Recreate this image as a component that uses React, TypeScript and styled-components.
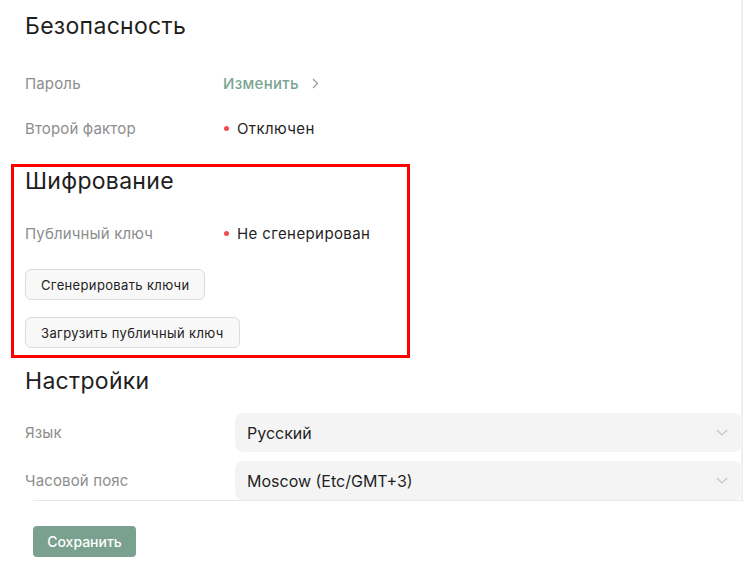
import React from "react";
import styled, { createGlobalStyle } from "styled-components";

const GlobalStyle = createGlobalStyle`
  body {
    margin: 0;
    background: #ffffff;
    font-family: Inter, "Noto Sans", "DejaVu Sans", sans-serif;
    color: #1f1f1f;
  }
`;

const Panel = styled.div`
  width: 743px;
  border-right: 2px solid #efefef;
  padding: 12px 0 0 25px;
  box-sizing: border-box;
`;

const Heading = styled.h2`
  margin: 0;
  font-size: 23px;
  line-height: 28px;
  font-weight: 400;
  letter-spacing: 0.3px;
  color: #1e1e1e;
`;

const InfoRow = styled.div<{ $top: number }>`
  display: flex;
  align-items: center;
  height: 22px;
  margin-top: ${(p) => p.$top}px;
`;

const Label = styled.div<{ $width: number }>`
  width: ${(p) => p.$width}px;
  flex-shrink: 0;
  font-size: 15px;
  letter-spacing: 0.15px;
  color: #8d8d8d;
`;

const Value = styled.div`
  display: flex;
  align-items: center;
  font-size: 15px;
  letter-spacing: 0.4px;
  color: #1f1f1f;
`;

const Dot = styled.span`
  width: 5px;
  height: 5px;
  border-radius: 50%;
  background: #f24b4b;
  margin: 0 8px 0 1px;
`;

const LinkButton = styled.button`
  display: flex;
  align-items: center;
  gap: 13px;
  padding: 0;
  border: none;
  background: none;
  font-family: inherit;
  font-size: 15px;
  font-weight: 500;
  letter-spacing: 0.3px;
  color: #7aa593;
  cursor: pointer;
`;

const Highlight = styled.section`
  width: 399px;
  margin: 25px 0 0 -14px;
  padding: 0 0 7px 11px;
  border: 3px solid #ff0000;
  box-sizing: border-box;
`;

const ActionButton = styled.button<{ $top: number }>`
  display: block;
  height: 31px;
  margin-top: ${(p) => p.$top}px;
  padding: 0 15px;
  border: 1px solid #dcdcdc;
  border-radius: 6px;
  background: #f8f8f8;
  font-family: inherit;
  font-size: 13px;
  letter-spacing: 0.35px;
  color: #222;
  cursor: pointer;
`;

const SettingsHeading = styled(Heading)`
  margin-top: 9px;
`;

const SelectRow = styled.div<{ $top: number }>`
  display: flex;
  align-items: center;
  margin-top: ${(p) => p.$top}px;
`;

const SelectBox = styled.div`
  flex: 1;
  height: 39px;
  margin-right: -1px;
  display: flex;
  align-items: center;
  justify-content: space-between;
  padding: 0 14px 0 12px;
  background: #f4f4f4;
  border-radius: 8px;
  font-size: 16px;
  color: #1f1f1f;
  cursor: pointer;
`;

const Divider = styled.div`
  height: 1px;
  margin-left: 8px;
  margin-right: -2px;
  background: #e8e8e8;
`;

const Footer = styled.div`
  padding: 25px 0 0 33px;
`;

const SaveButton = styled.button`
  width: 103px;
  height: 31px;
  border: none;
  border-radius: 4px;
  background: #7aa090;
  color: #ffffff;
  font-family: inherit;
  font-size: 14px;
  font-weight: 500;
  cursor: pointer;
`;

const ChevronRight = () => (
  <svg width="7" height="11" viewBox="0 0 7 11" fill="none">
    <path d="M1 1l4.5 4.5L1 10" stroke="#9a9a9a" strokeWidth="1.2" />
  </svg>
);

const ChevronDown = () => (
  <svg width="12" height="7" viewBox="0 0 12 7" fill="none">
    <path d="M1 1l5 5 5-5" stroke="#c2c2c2" strokeWidth="1.1" />
  </svg>
);

const Select: React.FC<{ value: string }> = ({ value }) => (
  <SelectBox>
    <span>{value}</span>
    <ChevronDown />
  </SelectBox>
);

const App: React.FC = () => {
  return (
    <>
      <GlobalStyle />
      <Panel>
        <Heading>Безопасность</Heading>
        <InfoRow $top={32}>
          <Label $width={198}>Пароль</Label>
          <LinkButton>
            Изменить
            <ChevronRight />
          </LinkButton>
        </InfoRow>
        <InfoRow $top={23}>
          <Label $width={198}>Второй фактор</Label>
          <Value>
            <Dot />
            Отключен
          </Value>
        </InfoRow>

        <Highlight>
          <Heading>Шифрование</Heading>
          <InfoRow $top={27}>
            <Label $width={198}>Публичный ключ</Label>
            <Value>
              <Dot />
              Не сгенерирован
            </Value>
          </InfoRow>
          <ActionButton $top={25}>Сгенерировать ключи</ActionButton>
          <ActionButton $top={17}>Загрузить публичный ключ</ActionButton>
        </Highlight>

        <SettingsHeading>Настройки</SettingsHeading>
        <SelectRow $top={18}>
          <Label $width={210}>Язык</Label>
          <Select value="Русский" />
        </SelectRow>
        <SelectRow $top={9}>
          <Label $width={210}>Часовой пояс</Label>
          <Select value="Moscow (Etc/GMT+3)" />
        </SelectRow>
        <Divider />
      </Panel>
      <Footer>
        <SaveButton>Сохранить</SaveButton>
      </Footer>
    </>
  );
};

export default App;
